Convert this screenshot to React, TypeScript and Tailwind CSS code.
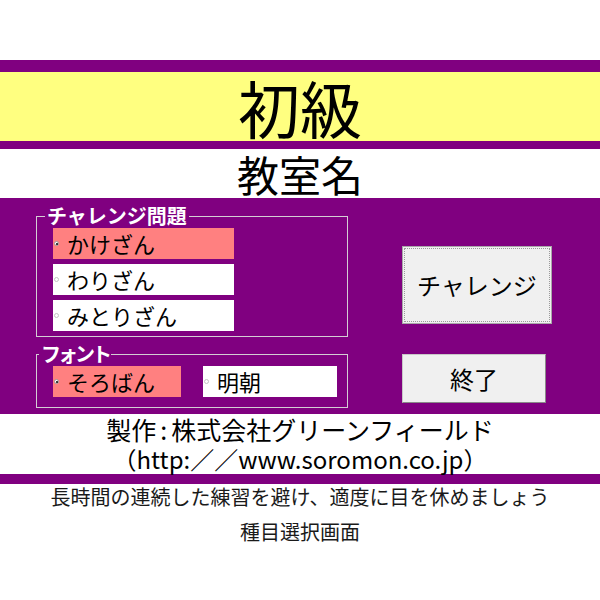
import React, { useState } from 'react';

const Radio = ({ checked }: { checked: boolean }) => (
  <span
    className={
      checked
        ? 'flex h-[5px] w-[5px] shrink-0 items-center justify-center rounded-full border border-[#9a9a9a] bg-white'
        : 'h-[5px] w-[5px] shrink-0 rounded-full border border-[#c4c4c4] bg-white'
    }
  >
    {checked && <span className="h-[2px] w-[2px] rounded-full bg-black" />}
  </span>
);

const Option = ({
  label,
  checked,
  width,
  onClick,
}: {
  label: string;
  checked: boolean;
  width: string;
  onClick: () => void;
}) => (
  <button
    type="button"
    onClick={onClick}
    className={
      (checked ? 'bg-[#ff8080] ' : 'bg-white ') +
      width +
      ' flex h-[31px] items-center pl-[1px] text-left text-[22px] leading-[31px] text-black'
    }
  >
    <Radio checked={checked} />
    <span className="ml-[8px]">{label}</span>
  </button>
);

const App = () => {
  const [problem, setProblem] = useState('かけざん');
  const [font, setFont] = useState('そろばん');

  return (
    <div className="w-[600px] h-[600px] bg-white font-['Noto_Sans_CJK_JP',sans-serif] text-black">
      <div className="h-[60px]" />
      <div className="h-[12px] bg-[#800080]" />
      <div className="flex h-[69px] items-center justify-center bg-[#ffff80] text-[62px] leading-none">
        初級
      </div>
      <div className="h-[8px] bg-[#800080]" />
      <div className="flex h-[49px] items-center justify-center text-[42px] leading-none">
        教室名
      </div>

      {/* main panel */}
      <div className="flex h-[216px] bg-[#800080] pl-[36px] pt-[8px]">
        <div className="flex w-[312px] flex-col">
          <fieldset className="border border-[#d4ccd4] p-0">
            <legend className="ml-[8px] px-[2px] text-[20px] font-bold leading-[20px] text-white">
              チャレンジ問題
            </legend>
            <div className="flex flex-col gap-[5px] pb-[5px] pl-[16px] pt-[2px]">
              {['かけざん', 'わりざん', 'みとりざん'].map((p) => (
                <Option
                  key={p}
                  label={p}
                  checked={problem === p}
                  width="w-[181px]"
                  onClick={() => setProblem(p)}
                />
              ))}
            </div>
          </fieldset>

          <fieldset className="mt-[7px] border border-[#d4ccd4] p-0">
            <legend className="ml-[2px] px-[2px] text-[20px] font-bold leading-[20px] tracking-[-3px] text-white">
              フォント
            </legend>
            <div className="flex gap-[22px] pb-[10px] pl-[16px] pt-[2px]">
              <Option
                label="そろばん"
                checked={font === 'そろばん'}
                width="w-[128px]"
                onClick={() => setFont('そろばん')}
              />
              <Option
                label="明朝"
                checked={font === '明朝'}
                width="w-[134px]"
                onClick={() => setFont('明朝')}
              />
            </div>
          </fieldset>
        </div>

        <div className="ml-[54px] flex flex-col items-start gap-[30px] pt-[40px]">
          <button
            type="button"
            className="h-[78px] w-[150px] border border-[#a8a8a8] bg-[#f0f0f0] text-[24px] leading-none outline-1 outline-dotted outline-[#9a9a9a] outline-offset-[-3px]"
          >
            チャレンジ
          </button>
          <button
            type="button"
            className="h-[49px] w-[144px] border border-[#c8c8c8] border-b-[#8a8a8a] border-r-[#8a8a8a] bg-[#f0f0f0] text-[24px] leading-none"
          >
            終了
          </button>
        </div>
      </div>

      <div className="flex h-[60px] flex-col items-center text-[25px] leading-[30px]">
        <div>
          製作<span className="mx-[4px]">:</span>株式会社グリーンフィールド
        </div>
        <div className="text-[24px]">（http:／／www.soromon.co.jp）</div>
      </div>
      <div className="h-[10px] bg-[#800080]" />
      <div className="text-center text-[20px] leading-[26px] text-[#1a1a1a]">
        長時間の連続した練習を避け、適度に目を休めましょう
      </div>
      <div className="mt-[9px] text-center text-[20px] leading-[26px] text-[#1a1a1a]">
        種目選択画面
      </div>
    </div>
  );
};

export default App;
